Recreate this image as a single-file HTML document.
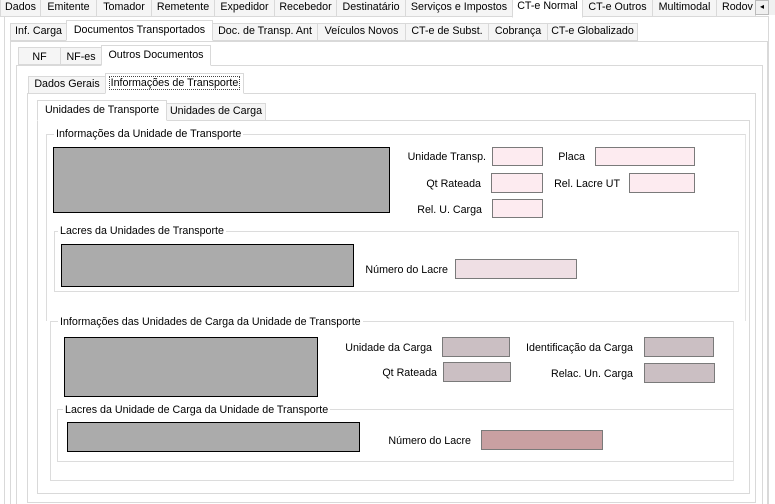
<!DOCTYPE html>
<html><head><meta charset="utf-8"><style>
html,body{margin:0;width:775px;height:504px;overflow:hidden}
body{background:#fff;font-family:"Liberation Sans",sans-serif;font-size:10.7px;color:#000}
#w{position:relative;width:775px;height:504px;overflow:hidden}
#w div{position:absolute;box-sizing:border-box}
.t{border:1px solid #d9d9d9;background:#f5f5f5;height:18px;line-height:15px;text-align:center;white-space:nowrap}
.s{background:#fff;border-bottom-color:#fff !important;height:21px;z-index:2}
.p{border:1px solid #d9d9d9}
.g{border:1px solid #dcdcdc;border-right-color:#e4e4e4}
.gt{background:#fff;padding:0 2px;line-height:12px;white-space:nowrap}
.box{background:#ababab;border:1px solid #000}
.l{white-space:nowrap;text-align:right;line-height:14px}
.i{border:1px solid #7a7a7a}
.pk{background:#fdebf0}
.pk2{background:#efdfe4}
.mv{background:#cbbfc3}
.rs{background:#c9a0a2}
</style></head><body><div id="w">
<!-- panels -->
<div class="p" style="left:4px;top:16px;width:765px;height:500px"></div>
<div class="p" style="left:10px;top:41px;width:758px;height:480px"></div>
<div class="p" style="left:16px;top:65px;width:747px;height:450px"></div>
<div class="p" style="left:27px;top:93px;width:729px;height:410px"></div>
<div class="p" style="left:37px;top:120px;width:713px;height:374px"></div>

<!-- row1 tabs -->
<div class="t" style="left:0;top:-1px;width:41px">Dados</div>
<div class="t" style="left:40px;top:-1px;width:57px">Emitente</div>
<div class="t" style="left:96px;top:-1px;width:56px">Tomador</div>
<div class="t" style="left:151px;top:-1px;width:64px">Remetente</div>
<div class="t" style="left:214px;top:-1px;width:61px">Expedidor</div>
<div class="t" style="left:274px;top:-1px;width:63px">Recebedor</div>
<div class="t" style="left:336px;top:-1px;width:70px">Destinatário</div>
<div class="t" style="left:405px;top:-1px;width:108px">Serviços e Impostos</div>
<div class="t s" style="left:512px;top:-3px;width:71px;line-height:17px">CT-e Normal</div>
<div class="t" style="left:582px;top:-1px;width:71px">CT-e Outros</div>
<div class="t" style="left:652px;top:-1px;width:65px">Multimodal</div>
<div class="t" style="left:716px;top:-1px;width:40px;text-align:left;padding-left:5px">Rodov</div>
<div style="left:755px;top:0;width:20px;height:15px;background:#f0f0f0;border:1px solid #bbb;font-size:8px;line-height:12px;padding-left:4px">◂</div>
<div style="left:768px;top:0;width:7px;height:15px;background:#f0f0f0;border-left:1px solid #bbb"></div>

<!-- row2 -->
<div class="t" style="left:10px;top:23px;width:57px">Inf. Carga</div>
<div class="t s" style="left:66px;top:20px;width:147px;line-height:19px">Documentos Transportados</div>
<div class="t" style="left:212px;top:23px;width:106px">Doc. de Transp. Ant</div>
<div class="t" style="left:317px;top:23px;width:89px">Veículos Novos</div>
<div class="t" style="left:405px;top:23px;width:84px">CT-e de Subst.</div>
<div class="t" style="left:488px;top:23px;width:60px">Cobrança</div>
<div class="t" style="left:547px;top:23px;width:91px">CT-e Globalizado</div>

<!-- row3 -->
<div class="t" style="left:18px;top:47px;width:43px;line-height:18px">NF</div>
<div class="t" style="left:60px;top:47px;width:42px;line-height:18px">NF-es</div>
<div class="t s" style="left:101px;top:45px;width:110px;line-height:19px">Outros Documentos</div>

<!-- row4 -->
<div class="t" style="left:28px;top:76px;width:78px">Dados Gerais</div>
<div class="t s" style="left:105px;top:73px;width:139px;line-height:19px"><span style="outline:1px dotted #444;padding:0 1px">Informações de Transporte</span></div>

<!-- row5 -->
<div class="t s" style="left:37px;top:100px;width:130px;line-height:19px">Unidades de Transporte</div>
<div class="t" style="left:166px;top:103px;width:100px">Unidades de Carga</div>

<!-- group 1 -->
<div class="g" style="left:46px;top:134px;width:700px;height:187px;border-bottom:none"></div>
<div class="gt" style="left:54px;top:128px">Informações da Unidade de Transporte</div>
<div class="box" style="left:53px;top:147px;width:337px;height:66px"></div>
<div class="l" style="left:380px;top:150px;width:106px">Unidade Transp.</div>
<div class="i pk" style="left:492px;top:147px;width:51px;height:19px"></div>
<div class="l" style="left:540px;top:150px;width:45px">Placa</div>
<div class="i pk" style="left:595px;top:147px;width:100px;height:19px"></div>
<div class="l" style="left:380px;top:177px;width:101px">Qt Rateada</div>
<div class="i pk" style="left:491px;top:173px;width:52px;height:20px"></div>
<div class="l" style="left:540px;top:177px;width:80px">Rel. Lacre UT</div>
<div class="i pk" style="left:629px;top:173px;width:66px;height:20px"></div>
<div class="l" style="left:380px;top:203px;width:102px">Rel. U. Carga</div>
<div class="i pk" style="left:492px;top:199px;width:51px;height:19px"></div>

<div class="g" style="left:54px;top:231px;width:685px;height:61px"></div>
<div class="gt" style="left:58px;top:225px">Lacres da Unidades de Transporte</div>
<div class="box" style="left:61px;top:244px;width:293px;height:43px"></div>
<div class="l" style="left:340px;top:263px;width:108px">Número do Lacre</div>
<div class="i pk2" style="left:455px;top:259px;width:122px;height:20px"></div>

<!-- group 2 -->
<div class="g" style="left:50px;top:321px;width:684px;height:160px"></div>
<div class="gt" style="left:58px;top:316px">Informações das Unidades de Carga da Unidade de Transporte</div>
<div class="box" style="left:64px;top:337px;width:254px;height:60px"></div>
<div class="l" style="left:320px;top:341px;width:112px">Unidade da Carga</div>
<div class="i mv" style="left:442px;top:337px;width:68px;height:20px"></div>
<div class="l" style="left:500px;top:341px;width:133px">Identificação da Carga</div>
<div class="i mv" style="left:644px;top:337px;width:70px;height:20px"></div>
<div class="l" style="left:330px;top:366px;width:107px">Qt Rateada</div>
<div class="i mv" style="left:443px;top:362px;width:68px;height:20px"></div>
<div class="l" style="left:520px;top:367px;width:113px">Relac. Un. Carga</div>
<div class="i mv" style="left:644px;top:363px;width:71px;height:20px"></div>

<div class="g" style="left:57px;top:409px;width:677px;height:53px"></div>
<div class="gt" style="left:63px;top:404px">Lacres da Unidade de Carga da Unidade de Transporte</div>
<div class="box" style="left:67px;top:422px;width:293px;height:30px"></div>
<div class="l" style="left:360px;top:434px;width:111px">Número do Lacre</div>
<div class="i rs" style="left:481px;top:430px;width:122px;height:20px"></div>
</div></body></html>
